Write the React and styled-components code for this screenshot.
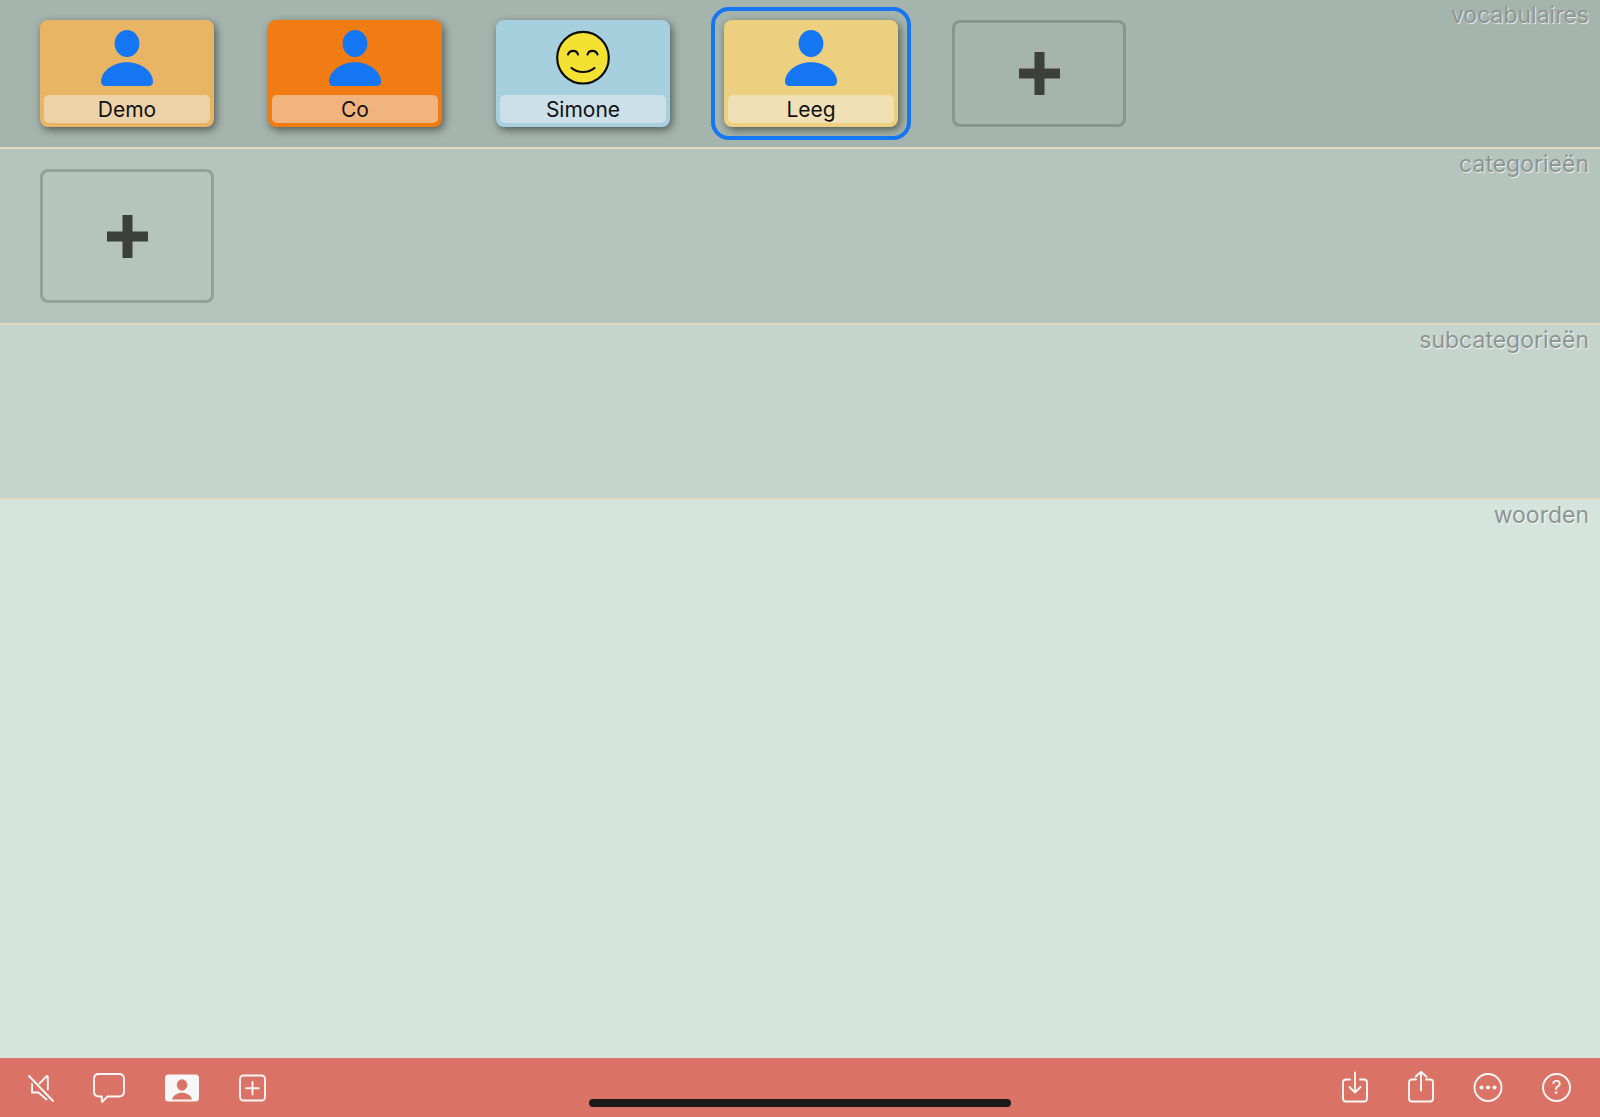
import React from 'react';
import styled, { createGlobalStyle } from 'styled-components';

const GlobalStyle = createGlobalStyle`
  *, *::before { box-sizing: border-box; }
  body {
    margin: 0;
    background: #d5e4dd;
    font-family: Inter, "Liberation Sans", sans-serif;
  }
  button { font: inherit; }
`;

const Page = styled.div`
  display: flex;
  flex-direction: column;
  min-height: 100vh;
`;

const Main = styled.main`
  display: flex;
  flex-direction: column;
  flex: 1;
`;

const Section = styled.section`
  display: flex;
  align-items: flex-start;
  justify-content: space-between;
  padding: 0 11px 0 40px;
  min-height: ${(p) => p.$minHeight || 0}px;
  flex: ${(p) => (p.$fill ? '1' : 'none')};
  background: ${(p) => p.$color};
  border-bottom: ${(p) => (p.$fill ? 'none' : '2px solid #e2d9c0')};
`;

const Tiles = styled.div`
  display: flex;
  flex-wrap: wrap;
  gap: 20px 54px;
  padding: ${(p) => (p.$empty ? '0' : '20px 0')};
`;

const SectionTitle = styled.h2`
  margin: 0;
  font-size: 23px;
  line-height: 31px;
  font-weight: 400;
  color: #8f9391;
  text-shadow: 1px 1px 1px rgba(255, 255, 255, 0.8);
`;

const Card = styled.button`
  position: relative;
  display: flex;
  flex-direction: column;
  align-items: center;
  justify-content: space-between;
  width: 174px;
  height: 107px;
  padding: 10px 4px 4px;
  border: 0;
  border-radius: 8px;
  background: ${(p) => p.$color};
  box-shadow: 2px 3px 9px rgba(0, 0, 0, 0.5);
  cursor: pointer;

  &[aria-pressed='true']::before {
    content: '';
    position: absolute;
    inset: -13px;
    border: 4px solid #1476f2;
    border-radius: 18px;
  }
`;

const CardLabel = styled.span`
  width: 100%;
  padding-top: 2px;
  border-radius: 5px;
  background: rgba(242, 242, 242, 0.48);
  color: #111;
  font-size: 21px;
  line-height: 26px;
  text-align: center;
`;

const AddTile = styled.button`
  display: flex;
  align-items: center;
  justify-content: center;
  width: 174px;
  height: ${(p) => (p.$tall ? 134 : 107)}px;
  padding: 0;
  border: 3px solid rgba(50, 75, 65, 0.28);
  border-radius: 8px;
  background: transparent;
  cursor: pointer;
`;

const Toolbar = styled.footer`
  position: relative;
  display: flex;
  align-items: center;
  justify-content: space-between;
  height: 59px;
  padding: 0 29px 0 28px;
  background: #da7265;
`;

const ToolGroup = styled.div`
  display: flex;
  align-items: center;
  gap: 40px;
`;

const ToolButton = styled.button`
  display: flex;
  padding: 0;
  border: 0;
  background: transparent;
  color: #f7f7f7;
  cursor: pointer;
`;

const HomeIndicator = styled.div`
  position: absolute;
  left: 50%;
  bottom: 10px;
  width: 422px;
  height: 8px;
  border-radius: 4px;
  background: #1b1a18;
  transform: translateX(-50%);
`;

const StrokeIcon = styled.svg`
  display: block;
  overflow: visible;
  fill: none;
  stroke: currentColor;
  stroke-width: 1.9;
  stroke-linecap: round;
  stroke-linejoin: round;
`;

const PersonIcon = () => (
  <svg width="52" height="56" viewBox="0 0 52 56" fill="#1476f2" aria-hidden="true">
    <ellipse cx="26" cy="13.5" rx="12.4" ry="13.5" />
    <path d="M4.5 56C1.5 56 0 54.400 0 51.500C0 42.500 10.500 32.200 26 32.200S52 42.500 52 51.500C52 54.400 50.500 56 47.500 56Z" />
  </svg>
);

const SmileyIcon = () => (
  <svg width="54" height="56" viewBox="0 0 54 56" fill="none" stroke="#0b0b08" strokeWidth="2.2" strokeLinecap="round" aria-hidden="true">
    <circle cx="27" cy="27.700" r="25.800" fill="#f4e233" />
    <path d="M12 24.500C13.500 19.800 20.500 19.500 22 24.500M31.500 24.500C33 19.500 40 19.800 41.500 24.500M15.500 38C21.500 43.300 32.500 43.300 38.500 38" />
  </svg>
);

const PlusIcon = () => (
  <svg width="41" height="43" viewBox="0 0 41 43" fill="#3d3f3d" aria-hidden="true">
    <path d="M15.500 0H25.500V16.500H41V26.500H25.500V43H15.500V26.500H0V16.500H15.500Z" />
  </svg>
);

const MuteIcon = () => (
  <StrokeIcon width="25" height="34" viewBox="0 0 25 34" aria-hidden="true">
    <path d="M1 5L25 30M11.500 12.500L18.200 5.500C19 4.700 19.800 5 19.800 6V18.500M4 13V21.500H10.500L18.500 28.500" />
  </StrokeIcon>
);

const BubbleIcon = () => (
  <StrokeIcon width="32" height="34" viewBox="0 0 32 34" aria-hidden="true">
    <path d="M6 3H26Q31 3 31 8V20.500Q31 25.500 26 25.500H14.500L9.500 30.700Q8.800 31.200 8.800 30.300V25.500H6Q1 25.500 1 20.500V8Q1 3 6 3Z" />
  </StrokeIcon>
);

const ContactIcon = () => (
  <svg width="34" height="34" viewBox="0 0 34 34" aria-hidden="true">
    <rect y="3.500" width="34" height="27" rx="3.500" fill="currentColor" />
    <ellipse cx="17" cy="14" rx="5.200" ry="5.800" fill="#da7265" />
    <path d="M7 28.500C8.500 24 12.500 21.800 17 21.800S25.500 24 27 28.500Z" fill="#da7265" />
  </svg>
);

const AddSquareIcon = () => (
  <StrokeIcon width="27" height="34" viewBox="0 0 27 34" aria-hidden="true">
    <rect x="1" y="4.500" width="25" height="25" rx="3.500" />
    <path d="M13.500 11V23.500M7.200 17.200H19.800" />
  </StrokeIcon>
);

const DownloadIcon = () => (
  <StrokeIcon width="26" height="34" viewBox="0 0 26 34" aria-hidden="true">
    <path d="M8 8.500H4Q1 8.500 1 11.500V27.500Q1 30.500 4 30.500H22Q25 30.500 25 27.500V11.500Q25 8.500 22 8.500H18M13 1.500V21.500M7.500 16L13 21.500L18.500 16" />
  </StrokeIcon>
);

const ShareIcon = () => (
  <StrokeIcon width="26" height="34" viewBox="0 0 26 34" aria-hidden="true">
    <path d="M8 8.500H4Q1 8.500 1 11.500V27.500Q1 30.500 4 30.500H22Q25 30.500 25 27.500V11.500Q25 8.500 22 8.500H18M13 19.500V0.800M7.500 5.800L13 0.800L18.500 5.800" />
  </StrokeIcon>
);

const MoreIcon = () => (
  <StrokeIcon width="28" height="34" viewBox="0 0 28 34" aria-hidden="true">
    <circle cx="14" cy="16.500" r="13.500" />
    <g fill="currentColor" stroke="none">
      <circle cx="7.500" cy="16.500" r="2.100" />
      <circle cx="14" cy="16.500" r="2.100" />
      <circle cx="20.500" cy="16.500" r="2.100" />
    </g>
  </StrokeIcon>
);

const HelpIcon = () => (
  <StrokeIcon width="29" height="34" viewBox="0 0 29 34" aria-hidden="true">
    <circle cx="14.500" cy="16.500" r="13.500" />
    <text x="14.500" y="23" textAnchor="middle" fontSize="19" fill="currentColor" stroke="none">?</text>
  </StrokeIcon>
);

const vocabularies = [
  { name: 'Demo', color: '#e7b563', Picture: PersonIcon },
  { name: 'Co', color: '#f27c14', Picture: PersonIcon },
  { name: 'Simone', color: '#a7d0de', Picture: SmileyIcon },
  { name: 'Leeg', color: '#ecd07f', Picture: PersonIcon },
];

const leftTools = [
  ['Geluid uit', MuteIcon],
  ['Bericht', BubbleIcon],
  ['Kaart', ContactIcon],
  ['Toevoegen', AddSquareIcon],
];

const rightTools = [
  ['Importeren', DownloadIcon],
  ['Delen', ShareIcon],
  ['Meer', MoreIcon],
  ['Help', HelpIcon],
];

const Tools = ({ items }) => (
  <ToolGroup>
    {items.map(([label, Icon]) => (
      <ToolButton key={label} type="button" aria-label={label}>
        <Icon />
      </ToolButton>
    ))}
  </ToolGroup>
);

export default function App() {
  const [selected, setSelected] = React.useState('Leeg');

  return (
    <Page>
      <GlobalStyle />
      <Main>
        <Section $color="#a5b4ad">
          <Tiles>
            {vocabularies.map(({ name, color, Picture }) => (
              <Card
                key={name}
                type="button"
                $color={color}
                aria-pressed={selected === name}
                onClick={() => setSelected(name)}
              >
                <Picture />
                <CardLabel>{name}</CardLabel>
              </Card>
            ))}
            <AddTile type="button" aria-label="Vocabulaire toevoegen">
              <PlusIcon />
            </AddTile>
          </Tiles>
          <SectionTitle>vocabulaires</SectionTitle>
        </Section>
        <Section $color="#b5c4bd">
          <Tiles>
            <AddTile type="button" $tall aria-label="Categorie toevoegen">
              <PlusIcon />
            </AddTile>
          </Tiles>
          <SectionTitle>categorieën</SectionTitle>
        </Section>
        <Section $color="#c5d4cd" $minHeight={175}>
          <Tiles $empty />
          <SectionTitle>subcategorieën</SectionTitle>
        </Section>
        <Section $color="#d5e4dd" $fill>
          <Tiles $empty />
          <SectionTitle>woorden</SectionTitle>
        </Section>
      </Main>
      <Toolbar>
        <Tools items={leftTools} />
        <Tools items={rightTools} />
        <HomeIndicator />
      </Toolbar>
    </Page>
  );
}
